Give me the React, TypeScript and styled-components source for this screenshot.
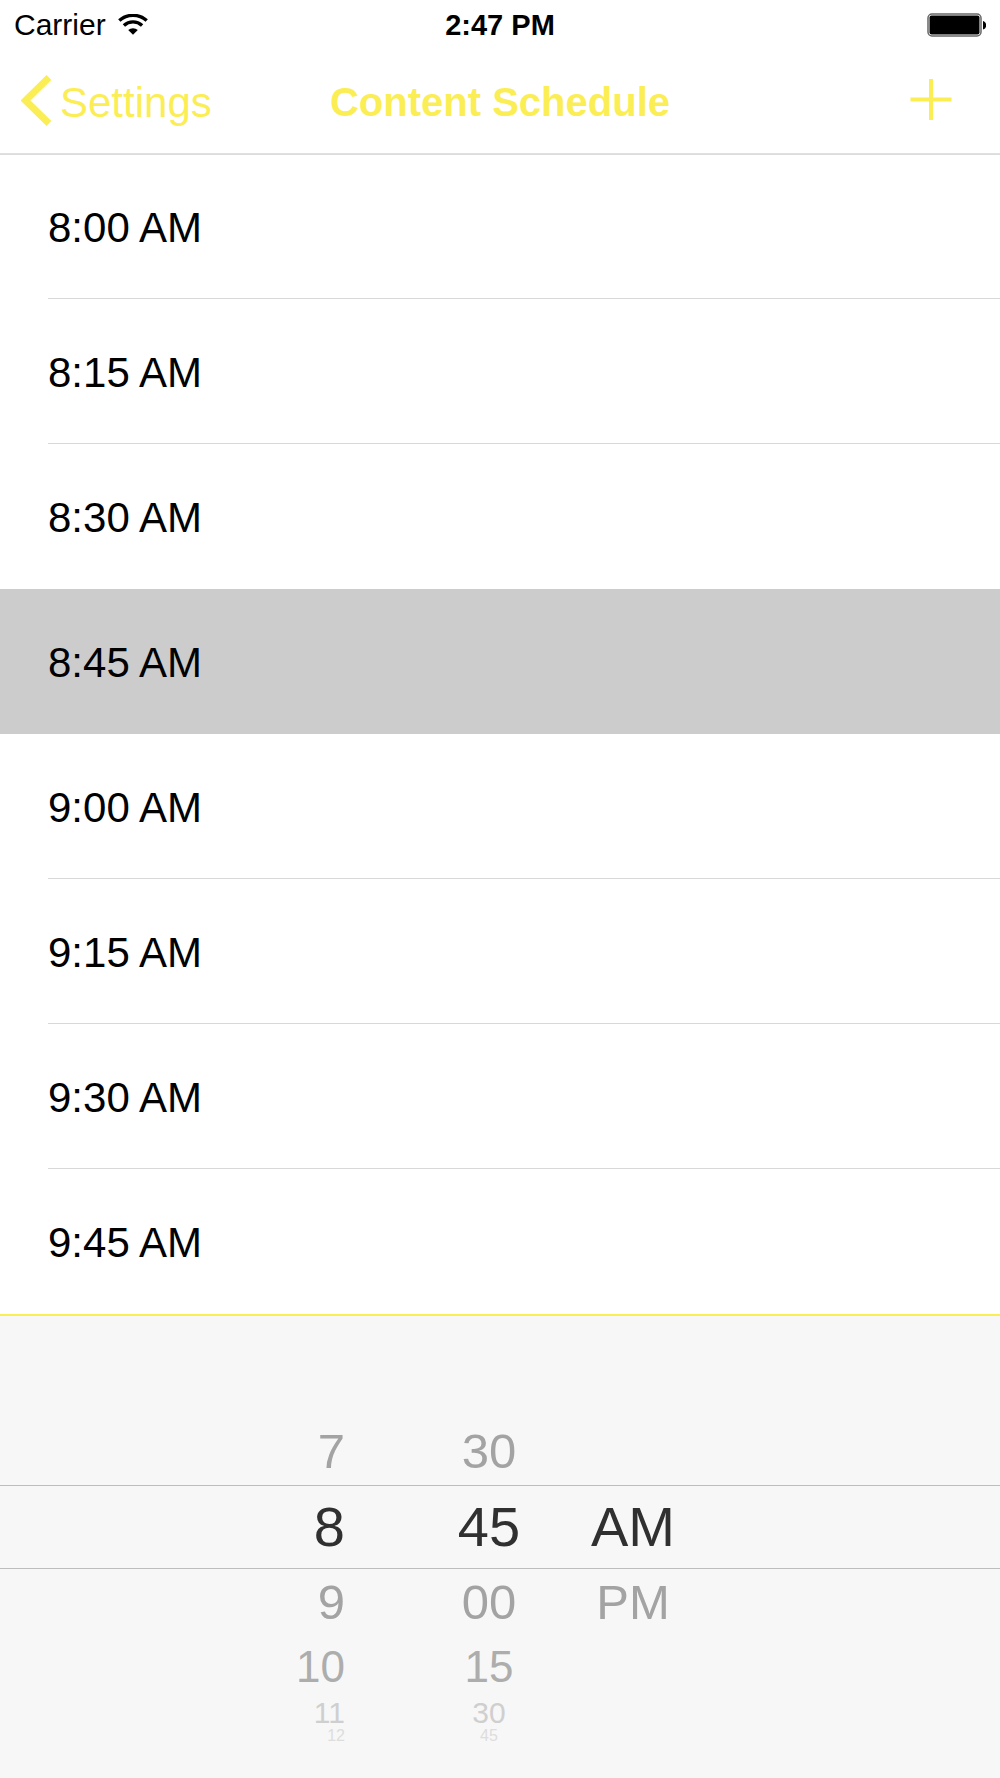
import React, { useState } from "react";
import styled, { createGlobalStyle } from "styled-components";

const yellow = "#fbee55";

const GlobalStyle = createGlobalStyle`
  *, *::before, *::after { box-sizing: border-box; }
  body {
    margin: 0;
    background: #f7f7f7;
    color: #000;
    font-family: "Liberation Sans", Arial, Helvetica, sans-serif;
  }
  button { font: inherit; color: inherit; border: 0; background: none; padding: 0; cursor: pointer; }
  ul { list-style: none; margin: 0; padding: 0; }
  svg { display: block; flex: none; }
`;

const Screen = styled.div`
  display: flex;
  flex-direction: column;
  min-height: 100vh;
`;

const Header = styled.header`
  position: relative;
  background: #fff;
  border-bottom: 1px solid #e0e0e0;
  box-shadow: 0 1px 0 #dcdcdc;
`;

const StatusBar = styled.div`
  display: grid;
  grid-template-columns: 1fr auto 1fr;
  align-items: center;
  height: 50px;
  padding: 0 14px;
  font-size: 30px;
`;

const Carrier = styled.div`
  display: flex;
  align-items: center;
  gap: 12px;
`;

const Clock = styled.time`
  font-size: 29px;
  font-weight: 700;
`;

const BatterySlot = styled.div`
  justify-self: end;
`;

const NavBar = styled.nav`
  display: grid;
  grid-template-columns: 1fr auto 1fr;
  align-items: center;
  height: 103px;
  padding: 2px 47px 0 21px;
  color: ${yellow};
  font-size: 42px;
`;

const BackLink = styled.a`
  display: flex;
  align-items: center;
  gap: 7px;
  color: inherit;
  text-decoration: none;
`;

const Title = styled.h1`
  margin: 0 0 0 26px;
  font-size: 40px;
  font-weight: 700;
`;

const AddButton = styled.button`
  justify-self: end;
`;

const ScheduleList = styled.ul`
  background: #fff;
`;

const ScheduleItem = styled.li<{ $selected: boolean; $line: boolean }>`
  padding-left: ${(p) => (p.$selected ? 0 : 48)}px;
  background: ${(p) => (p.$selected ? "#cccccc" : "#fff")};

  button {
    display: block;
    width: 100%;
    height: 145px;
    padding-top: 3px;
    padding-left: ${(p) => (p.$selected ? 48 : 0)}px;
    border-bottom: 1px solid ${(p) => (p.$line ? "#d8d8d8" : "transparent")};
    font-size: 42px;
    text-align: left;
  }
`;

const Picker = styled.section`
  position: relative;
  flex: 1;
  display: grid;
  grid-template-columns: 144px 144px 166px;
  justify-content: center;
  align-items: start;
  padding: 101px 0 32px;
  border-top: 2px solid ${yellow};
  background: #f7f7f7;
`;

const SelectionBand = styled.div`
  position: absolute;
  left: 0;
  right: 0;
  top: 169px;
  height: 84px;
  border: solid #bdbdbd;
  border-width: 1px 0;
  pointer-events: none;
`;

const Wheel = styled.ul<{ $align: "right" | "center"; $endPadding: number }>`
  padding-right: ${(p) => p.$endPadding}px;
  text-align: ${(p) => p.$align};
`;

const wheelSteps = [
  { height: 68, size: 49, color: "#a3a3a3" },
  { height: 84, size: 56, color: "#303030" },
  { height: 66, size: 49, color: "#a3a3a3" },
  { height: 64, size: 44, color: "#adadad" },
  { height: 28, size: 30, color: "#cfcfcf" },
  { height: 18, size: 16, color: "#dddddd" },
];

const WheelRow = styled.li<{ $step: number }>`
  height: ${(p) => wheelSteps[p.$step].height}px;
  line-height: ${(p) => wheelSteps[p.$step].height}px;
  font-size: ${(p) => wheelSteps[p.$step].size}px;
  color: ${(p) => wheelSteps[p.$step].color};

  button { line-height: inherit; }
`;

const times = ["8:00 AM", "8:15 AM", "8:30 AM", "8:45 AM", "9:00 AM", "9:15 AM", "9:30 AM", "9:45 AM"];

const wheels = [
  { label: "Hour", values: ["7", "8", "9", "10", "11", "12"], align: "right" as const, endPadding: 72 },
  { label: "Minute", values: ["30", "45", "00", "15", "30", "45"], align: "center" as const, endPadding: 0 },
  { label: "Period", values: ["", "AM", "PM"], align: "center" as const, endPadding: 22 },
];

const WifiIcon = () => (
  <svg width="30" height="22" viewBox="0 0 30 22" aria-hidden="true">
    <g fill="none" stroke="#000" strokeWidth="3.4">
      <path d="M1.3 6.6A20.5 20.5 0 0 1 28.7 6.6" />
      <path d="M5.9 11.4A13.6 13.6 0 0 1 24.1 11.4" />
    </g>
    <path d="M10.2 15.9A7.5 7.5 0 0 1 19.8 15.9L15 20.8Z" fill="#000" />
  </svg>
);

const BatteryIcon = () => (
  <svg width="59" height="24" viewBox="0 0 59 24" aria-hidden="true">
    <rect x="1" y="1" width="53" height="22" rx="4" fill="#fff" stroke="#666" strokeWidth="1.5" />
    <rect x="2.5" y="2.5" width="50" height="19" rx="2" fill="#000" />
    <path d="M56 8C60.2 9 60.2 15.5 56 16.5Z" fill="#000" />
  </svg>
);

export default function App() {
  const [selected, setSelected] = useState("8:45 AM");
  const selectedIndex = times.indexOf(selected);

  return (
    <Screen>
      <GlobalStyle />
      <Header>
        <StatusBar>
          <Carrier>
            Carrier
            <WifiIcon />
          </Carrier>
          <Clock>2:47 PM</Clock>
          <BatterySlot>
            <BatteryIcon />
          </BatterySlot>
        </StatusBar>
        <NavBar>
          <BackLink href="#settings">
            <svg width="32" height="56" viewBox="0 0 32 56" aria-hidden="true">
              <path d="M28 2.5L4.5 25.5L28 48.5" fill="none" stroke={yellow} strokeWidth="7" />
            </svg>
            Settings
          </BackLink>
          <Title>Content Schedule</Title>
          <AddButton aria-label="Add time">
            <svg width="44" height="50" viewBox="0 0 44 50" aria-hidden="true">
              <path d="M1.5 21.5H42.5M22 1V42" fill="none" stroke={yellow} strokeWidth="4" />
            </svg>
          </AddButton>
        </NavBar>
      </Header>
      <ScheduleList>
        {times.map((time, i) => (
          <ScheduleItem
            key={time}
            $selected={i === selectedIndex}
            $line={i !== selectedIndex && i + 1 !== selectedIndex && i < times.length - 1}
          >
            <button aria-pressed={i === selectedIndex} onClick={() => setSelected(time)}>
              {time}
            </button>
          </ScheduleItem>
        ))}
      </ScheduleList>
      <Picker aria-label="Time picker">
        <SelectionBand />
        {wheels.map((wheel) => (
          <Wheel key={wheel.label} aria-label={wheel.label} $align={wheel.align} $endPadding={wheel.endPadding}>
            {wheel.values.map((value, step) => (
              <WheelRow key={step} $step={step}>
                {value && <button>{value}</button>}
              </WheelRow>
            ))}
          </Wheel>
        ))}
      </Picker>
    </Screen>
  );
}
